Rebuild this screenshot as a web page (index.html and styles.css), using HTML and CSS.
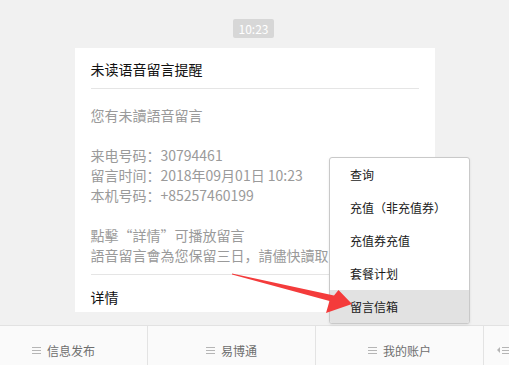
FILE: index.html
```html
<!DOCTYPE html>
<html lang="zh">
<head>
<meta charset="utf-8">
<link rel="stylesheet" href="styles.css">
</head>
<body>
<div class="page">
  <div class="time-row"><span class="time">10:23</span></div>
  <div class="card">
    <div class="card-title">未读语音留言提醒</div>
    <div class="card-body">
      <p>您有未讀語音留言</p>
      <p>&nbsp;</p>
      <p>来电号码：30794461</p>
      <p>留言时间：2018年09月01日 10:23</p>
      <p>本机号码：+85257460199</p>
      <p>&nbsp;</p>
      <p>點擊“詳情”可播放留言</p>
      <p>語音留言會為您保留三日，請儘快讀取</p>
    </div>
    <div class="card-foot">详情</div>
  </div>
  <div class="tabbar">
    <div class="tabs">
      <div class="tab"><svg class="ico" width="9" height="8" viewBox="0 0 9 8"><path d="M0 1.5h9M0 4.5h9M0 7.5h9" stroke="#b5b5b5" stroke-width="1"/></svg><span>信息发布</span></div>
      <div class="tab"><svg class="ico" width="9" height="8" viewBox="0 0 9 8"><path d="M0 1.5h9M0 4.5h9M0 7.5h9" stroke="#b5b5b5" stroke-width="1"/></svg><span>易博通</span></div>
      <div class="tab"><svg class="ico" width="9" height="8" viewBox="0 0 9 8"><path d="M0 1.5h9M0 4.5h9M0 7.5h9" stroke="#b5b5b5" stroke-width="1"/></svg><span>我的账户</span></div>
      <div class="tab tab-last"><span class="tri"></span><svg class="ico" width="9" height="8" viewBox="0 0 9 8"><path d="M0 1.5h9M0 4.5h9M0 7.5h9" stroke="#b5b5b5" stroke-width="1"/></svg></div>
    </div>
  </div>
  <div class="menu">
    <div class="menu-item">查询</div>
    <div class="menu-item">充值（非充值券）</div>
    <div class="menu-item">充值券充值</div>
    <div class="menu-item">套餐计划</div>
    <div class="menu-item active">留言信箱</div>
  </div>
  <svg class="arrow" width="509" height="365" viewBox="0 0 509 365">
    <polygon points="232,273.5 334,295.5 338.5,290 352,304 326,313 329.5,301 232,274.5" fill="#f43b3b"/>
  </svg>
</div>
</body>
</html>
```

FILE: styles.css
```css
html, body {
  margin: 0;
  padding: 0;
}
body {
  background: #f1f1f1;
  font-family: "Noto Sans CJK SC", "Noto Sans", sans-serif;
  overflow: hidden;
  width: 509px;
  height: 365px;
}
.page {
  position: relative;
  width: 509px;
  height: 365px;
  overflow: hidden;
}
.time-row {
  display: flex;
  justify-content: center;
  padding-top: 19px;
}
.time {
  display: block;
  background: #d7d7d7;
  color: #fff;
  font-size: 12px;
  line-height: 19px;
  height: 19px;
  padding: 0 6px;
  border-radius: 2px;
  margin-right: 2px;
}
.card {
  width: 328px;
  margin: 10px auto 0;
  background: #fff;
  padding: 0 16px;
}
.card-title {
  font-size: 14px;
  line-height: 22px;
  color: #111;
  padding: 10px 0 8px;
  border-bottom: 1px solid #e5e5e5;
}
.card-body {
  padding: 16px 0 9px;
  border-bottom: 1px solid #e5e5e5;
  font-size: 14px;
  line-height: 20px;
  color: #9a9a9a;
}
.card-body p {
  margin: 0;
  white-space: nowrap;
}
.card-foot {
  font-size: 14px;
  line-height: 22px;
  color: #111;
  padding: 11px 0 4px;
}
.tabbar {
  margin-top: 13px;
  border-top: 1px solid #e2e2e2;
  background: #fafafa;
  height: 48px;
  overflow: hidden;
}
.tabs {
  display: flex;
  margin-left: -20px;
  height: 48px;
}
.tab {
  flex: 0 0 167px;
  border-right: 1px solid #e3e3e3;
  display: flex;
  align-items: center;
  justify-content: center;
  gap: 6px;
  font-size: 12px;
  color: #6e6e6e;
}
.tab-last {
  justify-content: flex-start;
  padding-left: 13px;
  gap: 2px;
}
.tri {
  width: 0;
  height: 0;
  border-top: 3px solid transparent;
  border-bottom: 3px solid transparent;
  border-right: 3px solid #b5b5b5;
}
.ico {
  display: block;
}
.menu {
  position: absolute;
  left: 329px;
  top: 157px;
  width: 139px;
  background: #fff;
  border: 1px solid #c9c9c9;
  border-radius: 3px;
  overflow: hidden;
  box-shadow: 0 1px 3px rgba(0, 0, 0, 0.08);
}
.menu-item {
  height: 33px;
  line-height: 33px;
  padding-left: 20px;
  font-size: 12px;
  color: #1a1a1a;
}
.menu-item.active {
  background: #e2e2e2;
}
.arrow {
  position: absolute;
  left: 0;
  top: 0;
  pointer-events: none;
}
```
